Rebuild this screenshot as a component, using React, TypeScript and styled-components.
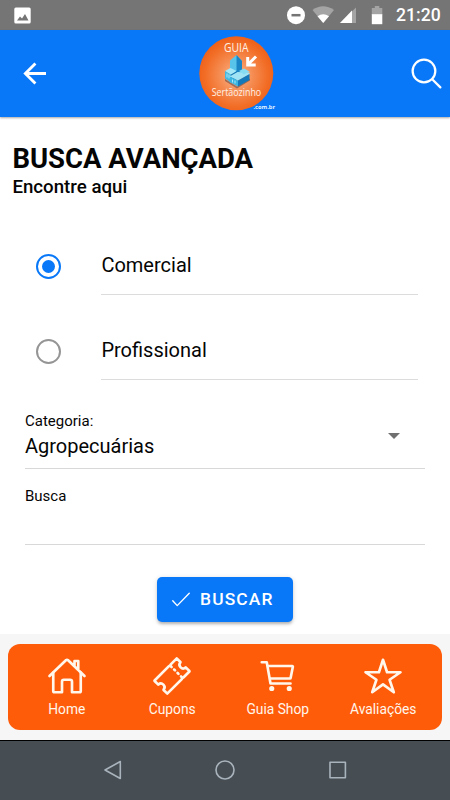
import React, { useState } from 'react';
import styled, { createGlobalStyle } from 'styled-components';

const blue = '#0878f8';

const GlobalStyle = createGlobalStyle`
  * { box-sizing: border-box; }
  body { margin: 0; background: #fff; font-family: Roboto, "Liberation Sans", sans-serif; color: #050505; }
  button { font-family: inherit; border: 0; padding: 0; background: none; }
`;

const Screen = styled.div`
  width: 450px;
  height: 800px;
  display: flex;
  flex-direction: column;
  overflow: hidden;
`;

const StatusBar = styled.div`
  height: 30px;
  flex: none;
  display: flex;
  align-items: center;
  justify-content: space-between;
  padding: 0 9px 0 14px;
  background: #757575;
`;

const StatusIcons = styled.div`
  display: flex;
  align-items: center;
`;

const Clock = styled.span`
  width: 45px;
  margin-left: 13px;
  font-size: 17.6px;
  line-height: 30px;
  font-weight: 500;
  color: #fff;
  white-space: nowrap;
`;

const Header = styled.header`
  height: 87px;
  flex: none;
  display: grid;
  grid-template-columns: 190px 95px 165px;
  align-items: center;
  background: ${blue};
  box-shadow: 0 1px 2px rgba(0, 0, 0, 0.35);
`;

const HeaderButton = styled.button<{ $end?: boolean }>`
  display: flex;
  color: #fff;
  justify-content: ${(p) => (p.$end ? 'flex-end' : 'flex-start')};
  padding: ${(p) => (p.$end ? '0 5px 0 0' : '0 0 0 18px')};
`;

const Content = styled.main`
  flex: 1;
  display: flex;
  flex-direction: column;
`;

const Title = styled.h1`
  margin: 26px 0 0 12.4px;
  font-size: 27.5px;
  line-height: 32px;
  font-weight: 700;
  white-space: nowrap;
`;

const Subtitle = styled.h2`
  margin: 1px 0 0 12.4px;
  font-size: 18.7px;
  line-height: 22px;
  font-weight: 500;
`;

const RadioGroup = styled.div`
  margin-top: 13px;
`;

const RadioRow = styled.label`
  height: 85px;
  display: grid;
  grid-template-columns: 65.4px 317px;
  align-items: start;
  padding: 24px 0 0 36px;
`;

const RadioMark = styled.span<{ $on: boolean }>`
  width: 25px;
  height: 25px;
  margin-top: 19px;
  border: 2.5px solid ${(p) => (p.$on ? blue : '#959595')};
  border-radius: 50%;
  display: grid;
  place-items: center;

  &::after {
    content: '';
    width: 13px;
    height: 13px;
    border-radius: 50%;
    background: ${(p) => (p.$on ? blue : 'transparent')};
  }
`;

const RadioLabel = styled.span`
  height: 60px;
  padding-top: 18px;
  border-bottom: 1px solid #dcdcdc;
  font-size: 20px;
  line-height: 24px;
`;

const Field = styled.div<{ $height: number; $top: number }>`
  height: ${(p) => p.$height}px;
  padding-top: ${(p) => p.$top}px;
  margin: 0 25px;
  border-bottom: 1px solid #d8d8d8;
`;

const FieldLabel = styled.div`
  font-size: 15px;
  line-height: 20px;
`;

const SelectValue = styled.div`
  display: flex;
  justify-content: space-between;
  font-size: 20px;
  line-height: 26px;
  margin-top: 2px;
  padding-right: 25px;
`;

const Caret = styled.span`
  width: 0;
  height: 0;
  border: 6px solid transparent;
  border-top-color: #707070;
  border-bottom: 0;
`;

const SubmitButton = styled.button`
  width: 136.5px;
  height: 45px;
  margin: 32px 0 0 156.5px;
  display: flex;
  align-items: center;
  gap: 8px;
  padding: 0 0 2px 13.5px;
  border-radius: 5px;
  background: ${blue};
  color: #fff;
  font-size: 17.4px;
  font-weight: 500;
  letter-spacing: 1.15px;
  box-shadow: 0 3px 3px -1px rgba(0, 0, 0, 0.22), 0 1px 5px rgba(0, 0, 0, 0.16);
`;

const Footer = styled.footer`
  height: 107px;
  flex: none;
  padding: 10px 8px 0;
  background: #f6f6f6;
  border-bottom: 1px solid #000;
`;

const TabBar = styled.nav`
  height: 86px;
  display: grid;
  grid-template-columns: repeat(4, 105.5px);
  justify-content: center;
  padding: 12px 0 0;
  border-radius: 12px;
  background: #ff5c0a;
`;

const Tab = styled.button`
  display: flex;
  flex-direction: column;
  align-items: center;
  justify-content: flex-start;
  color: #fff6ec;
  font-size: 13.8px;
  line-height: 18px;
  white-space: nowrap;
  gap: 4px;
`;

const SystemNav = styled.div`
  height: 59px;
  flex: none;
  display: flex;
  align-items: center;
  justify-content: center;
  gap: 88.5px;
  padding-bottom: 1px;
  background: #464d53;
`;

function LineIcon({ size, width = 32, children }: { size: number; width?: number; children: React.ReactNode }) {
  return (
    <svg width={size} height={size} viewBox="0 0 512 512" fill="none" stroke="currentColor"
      strokeWidth={width} strokeLinecap="round" strokeLinejoin="round">
      {children}
    </svg>
  );
}

function Logo() {
  return (
    <svg width="95" height="87" viewBox="0 0 95 87" fontFamily='"Open Sans", "Noto Sans", sans-serif'>
      <defs>
        <radialGradient id="disc" cx="0.5" cy="0.53" r="0.52">
          <stop offset="0" stopColor="#fbb68e" />
          <stop offset="0.45" stopColor="#f58b50" />
          <stop offset="0.8" stopColor="#f26e27" />
          <stop offset="1" stopColor="#ef611a" />
        </radialGradient>
      </defs>
      <circle cx="46.3" cy="43.3" r="37" fill="url(#disc)" />
      <path d="M35 49l12 7.500 13-8v2l-13 8-12-7.500z" fill="#684b4a" opacity="0.6" />
      <path d="M40 38V30.500L46.500 25l5.500 6v11l-6 3-6-3z" fill="#58c4ea" />
      <path d="M46.500 25l5.500 6v11l-5.500 3z" fill="#1a86c6" />
      <path d="M35 41l5.500-3 6 3-5.500 4z" fill="#a5e9f8" />
      <path d="M35 41l6 3.500v8L35 48.500z" fill="#45b8e2" />
      <path d="M41 44.500l6-3.500v8l-6 3.500z" fill="#1678b4" />
      <path d="M39.500 46.500l8-4.500 12 .5v2l-11.500 6z" fill="#a1e4f5" />
      <path d="M49 41l5-2.500 5.500 3-5.500 3z" fill="#86dcf3" />
      <path d="M39.500 46.500l8.500 4v6l-8.500-4.500z" fill="#3cb5e1" />
      <path d="M48 50.500l11.500-6.500v6L48 56.500z" fill="#1679b9" />
      <path d="M37 43.500v4m2-3v4m3.500 1v3m2.500-2v3" stroke="#d6faff" strokeWidth="0.7" />
      <path d="M66 26.500l-7.300 7.300M57.700 27v8h8" fill="none" stroke="#fff" strokeWidth="3" />
      <text x="34" y="22.400" fontSize="12" fontWeight="500" textLength="24.500" lengthAdjust="spacingAndGlyphs" fill="#fff1e7">GUIA</text>
      <text x="21.700" y="65.500" fontSize="10" fontWeight="500" textLength="49.500" lengthAdjust="spacingAndGlyphs" fill="#fff0e5">Sertãozinho</text>
      <text x="63.500" y="79" fontSize="6" fontWeight="700" textLength="21.500" lengthAdjust="spacingAndGlyphs" fill="#e3f2ff">.com.br</text>
    </svg>
  );
}

const tabs = [
  {
    label: 'Home',
    icon: (
      <>
        <path d="M80 212v236a16 16 0 0016 16h96V328a24 24 0 0124-24h80a24 24 0 0124 24v136h96a16 16 0 0016-16V212" />
        <path d="M480 256L266.890 52c-5-5.280-16.690-5.340-21.780 0L32 256M400 179V64h-48v69" />
      </>
    ),
  },
  {
    label: 'Cupons',
    icon: (
      <>
        <path d="M366.050 146a46.700 46.700 0 01-2.420-63.420 3.870 3.870 0 00-.22-5.260l-44.130-44.180a3.890 3.890 0 00-5.500 0l-70.340 70.340a23.620 23.620 0 00-5.710 9.240 23.660 23.660 0 01-14.950 15 23.700 23.700 0 00-9.250 5.710L33.140 313.780a3.890 3.890 0 000 5.500l44.130 44.130a3.870 3.870 0 005.260.22 46.690 46.690 0 0165.840 65.840 3.870 3.870 0 00.22 5.260l44.130 44.130a3.890 3.890 0 005.500 0l180.400-180.390a23.700 23.700 0 005.710-9.250 23.660 23.660 0 0114.950-15 23.620 23.620 0 009.240-5.710l70.340-70.340a3.890 3.890 0 000-5.500l-44.130-44.130a3.870 3.870 0 00-5.260-.22 46.700 46.700 0 01-63.420-2.320z" />
        <path d="M250.500 140.440l-16.510-16.510M294.520 184.460l-11-11M338.540 228.490l-11-11M388.070 278.010l-16.510-16.510" />
      </>
    ),
  },
  {
    label: 'Guia Shop',
    icon: (
      <>
        <circle cx="176" cy="416" r="16" fill="currentColor" />
        <circle cx="400" cy="416" r="16" fill="currentColor" />
        <path d="M48 80h64l48 272h256" />
        <path d="M160 288h249.440a8 8 0 007.850-6.430l28.800-144a8 8 0 00-7.850-9.570H128" />
      </>
    ),
  },
  { label: 'Avaliações', icon: <path d="M480 208H308L256 48l-52 160H32l140 96-54 160 138-100 138 100-54-160z" /> },
];

const options = ['Comercial', 'Profissional'];

export default function App() {
  const [selected, setSelected] = useState(options[0]);

  return (
    <Screen>
      <GlobalStyle />
      <StatusBar>
        <svg width="17" height="17" viewBox="0 0 17 17">
          <rect x="0.300" y="0.500" width="16.400" height="16" rx="1.500" fill="#fff" />
          <path d="M3 13.500l3-4 2 2 3-4.500 3.500 6.500z" fill="#757575" />
        </svg>
        <StatusIcons>
          <svg width="96" height="30" viewBox="0 0 96 30">
            <circle cx="9" cy="15.200" r="9" fill="#fff" />
            <path d="M4.500 15.200h9" stroke="#757575" strokeWidth="2.500" />
            <path d="M25.500 10Q36 2.500 47 10L36.200 23z" fill="#a4a4a4" />
            <path d="M30.500 16.200Q36.200 12.500 42 16.200L36.200 23z" fill="#fff" />
            <path d="M53 23L69 7.500V23z" fill="#a4a4a4" />
            <path d="M53 23L65 10.500V23z" fill="#fff" />
            <path d="M84.800 8h3V6h4.500v2h3v7H84.800z" fill="#a4a4a4" />
            <path d="M84.800 14.200h10.500v10H84.800z" fill="#fff" />
          </svg>
          <Clock>21:20</Clock>
        </StatusIcons>
      </StatusBar>

      <Header>
        <HeaderButton aria-label="Voltar">
          <svg width="34" height="33" viewBox="0 0 24 24" fill="none" stroke="#fff" strokeWidth="2.100">
            <path d="M20 12H5M12.300 4.700L5 12l7.300 7.300" />
          </svg>
        </HeaderButton>
        <Logo />
        <HeaderButton $end aria-label="Pesquisar">
          <LineIcon size={37} width={31}>
            <path d="M221.090 64a157.090 157.090 0 10157.090 157.090A157.100 157.100 0 00221.090 64zM338.290 338.290L448 448" />
          </LineIcon>
        </HeaderButton>
      </Header>

      <Content>
        <Title>BUSCA AVANÇADA</Title>
        <Subtitle>Encontre aqui</Subtitle>
        <RadioGroup role="radiogroup">
          {options.map((option) => (
            <RadioRow key={option} onClick={() => setSelected(option)}>
              <RadioMark role="radio" aria-checked={selected === option} $on={selected === option} />
              <RadioLabel>{option}</RadioLabel>
            </RadioRow>
          ))}
        </RadioGroup>
        <Field $height={88} $top={30}>
          <FieldLabel>Categoria:</FieldLabel>
          <SelectValue>
            Agropecuárias
            <Caret />
          </SelectValue>
        </Field>
        <Field $height={76} $top={17}>
          <FieldLabel>Busca</FieldLabel>
        </Field>
        <SubmitButton>
          <LineIcon size={22} width={32}>
            <path d="M448 122L168 410 64 298" />
          </LineIcon>
          BUSCAR
        </SubmitButton>
      </Content>

      <Footer>
        <TabBar>
          {tabs.map((tab) => (
            <Tab key={tab.label}>
              <LineIcon size={40} width={34}>{tab.icon}</LineIcon>
              {tab.label}
            </Tab>
          ))}
        </TabBar>
      </Footer>

      <SystemNav>
        <svg width="24" height="24" viewBox="0 0 24 24" fill="none" stroke="#a9b3bc" strokeWidth="1.600" strokeLinejoin="round">
          <path d="M4 12L19.300 3.500v17z" />
        </svg>
        <svg width="24" height="24" viewBox="0 0 24 24" fill="none" stroke="#a9b3bc" strokeWidth="1.600">
          <circle cx="12" cy="12" r="9" />
        </svg>
        <svg width="24" height="24" viewBox="0 0 24 24" fill="none" stroke="#a9b3bc" strokeWidth="1.600" strokeLinejoin="round">
          <rect x="4" y="4.300" width="15.400" height="15.400" />
        </svg>
      </SystemNav>
    </Screen>
  );
}
